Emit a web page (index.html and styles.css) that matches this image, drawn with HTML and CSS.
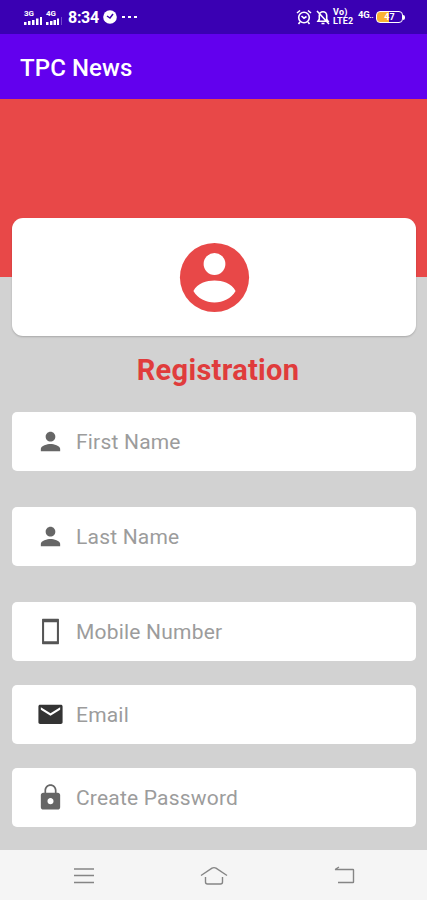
FILE: index.html
```html
<!DOCTYPE html>
<html lang="en">
<head>
    <meta charset="UTF-8">
    <meta name="viewport" content="width=device-width, initial-scale=1.0">
    <title>TPC News</title>
    <link rel="stylesheet" href="styles.css">
</head>
<body>
    <div class="status-bar">
        <div class="signal">
            <span>3G</span>
            <svg width="19" height="8" viewBox="0 0 19 8"><path d="M0 5h2.500v3H0zM4 4h2.500v4H4zM8 3h2.500v5H8zM12 1.500h2.500v6.500H12zM16 0h2v8h-2z"/></svg>
        </div>
        <div class="signal">
            <span>4G</span>
            <svg width="17" height="8" viewBox="0 0 17 8"><path d="M0 5h2.500v3H0zM4 4h2.500v4H4zM7.500 3H10v5H7.500zM11 1.500h2v6.500h-2z"/><path d="M15 0h1v8h-1z" opacity=".3"/></svg>
        </div>
        <span class="time">8:34</span>
        <svg class="clock" width="14" height="14" viewBox="0 0 14 14">
            <circle cx="7" cy="7" r="6.800"/>
            <path d="M4 6l3 2 3-4" fill="none" stroke="#3a00ad" stroke-width="1.500"/>
        </svg>
        <svg class="dots" width="16" height="4" viewBox="0 0 16 4"><path d="M0 1h3v2H0zM6 1h3v2H6zM12 1h3v2h-3z"/></svg>

        <div class="status-right">
            <svg width="16" height="16" viewBox="0 0 16 16" fill="none" stroke="#fff" stroke-width="1.600">
                <circle cx="8" cy="8.500" r="5.300"/>
                <path d="M1 4l3-2.500M15 4l-3-2.500M5.500 7l2.500 2.200 2.500-1.700M4 13l-1.500 2M12 13l1.500 2"/>
            </svg>
            <svg class="bell" width="14" height="16" viewBox="0 0 14 16" fill="none" stroke="#fff" stroke-width="1.600">
                <path d="M2 12.200h10l-1.300-2V6.500a3.700 3.700 0 0 0-7.400 0v3.700zM5.500 14.500h3M1 2l12 13"/>
            </svg>
            <div class="volte"><span>Vo)</span><span>LTE2</span></div>
            <span class="net">4G<small>..</small></span>
            <div class="battery"><span>47</span></div>
            <i class="battery-tip"></i>
        </div>
    </div>

    <header class="app-bar">
        <h1>TPC News</h1>
    </header>

    <main class="content">
        <div class="avatar-card">
            <svg width="83" height="83" viewBox="0 0 24 24">
                <circle cx="12" cy="12" r="10" fill="#e84848"/>
                <circle cx="12" cy="8.100" r="3.150" fill="#fff"/>
                <path d="M5.900 15.900C7.100 13.700 9.700 12.900 12 12.900s4.900.8 6.100 3c-1.300 2.200-3.600 3.300-6.100 3.300s-4.800-1.100-6.100-3.300z" fill="#fff"/>
            </svg>
        </div>

        <h2>Registration</h2>

        <form class="form">
            <label class="field wide">
                <svg width="29" height="29" viewBox="0 0 24 24"><path d="M12 12c2.210 0 4-1.790 4-4s-1.790-4-4-4-4 1.790-4 4 1.790 4 4 4zm0 2c-2.670 0-8 1.340-8 4v2h16v-2c0-2.660-5.330-4-8-4z"/></svg>
                <input type="text" placeholder="First Name">
            </label>
            <label class="field wide">
                <svg width="29" height="29" viewBox="0 0 24 24"><path d="M12 12c2.210 0 4-1.790 4-4s-1.790-4-4-4-4 1.790-4 4 1.790 4 4 4zm0 2c-2.670 0-8 1.340-8 4v2h16v-2c0-2.660-5.330-4-8-4z"/></svg>
                <input type="text" placeholder="Last Name">
            </label>
            <label class="field">
                <svg width="29" height="29" viewBox="0 0 24 24" class="phone"><path d="M18.500 1.500h-13q-.5 0-.5.5v20q0 .5.5.5h13q.5 0 .5-.5V2q0-.5-.5-.5zM17.300 20H6.700V4.300h10.600V20z"/></svg>
                <input type="tel" placeholder="Mobile Number">
            </label>
            <label class="field">
                <svg width="29" height="29" viewBox="0 0 24 24" class="mail"><path d="M20.500 4h-17C2.600 4 2 4.500 2 5.300v13.200c0 .8.600 1.300 1.500 1.300h17c.9 0 1.500-.5 1.500-1.300V5.300c0-.8-.6-1.300-1.500-1.300zm-.5 4l-8 5-8-5V6l8 5 8-5v2z"/></svg>
                <input type="email" placeholder="Email">
            </label>
            <label class="field">
                <svg width="29" height="29" viewBox="0 0 24 24"><path d="M18 8h-1V6c0-2.760-2.240-5-5-5S7 3.240 7 6v2H6c-1.100 0-2 .9-2 2v10c0 1.100.9 2 2 2h12c1.100 0 2-.9 2-2V10c0-1.100-.9-2-2-2zm-6 9.500c-1.400 0-2.500-1.100-2.500-2.500s1.100-2.500 2.500-2.500 2.500 1.100 2.500 2.500-1.100 2.500-2.500 2.500zm3.600-9.500H8.400V6c0-1.990 1.610-3.600 3.600-3.600s3.600 1.610 3.600 3.600v2z"/></svg>
                <input type="password" placeholder="Create Password">
            </label>
        </form>
    </main>

    <nav class="nav-bar">
        <svg width="20" height="18" viewBox="0 0 20 18"><path d="M0 2h20M0 8.500h20M0 15.500h20"/></svg>
        <svg width="28" height="20" viewBox="0 0 28 20"><path d="M1 9.500L12 2.200q2-1.200 4 0L27 9.500M5.500 11v5q0 2 2 2h13q2 0 2-2v-5"/></svg>
        <svg width="21" height="20" viewBox="0 0 21 20"><path d="M1 3.500h18q.5 0 .5.500v12q0 .5-.5.500H4M5 1L1 3.500"/></svg>
    </nav>
</body>
</html>
```
FILE: styles.css
```css
* {
    box-sizing: border-box;
}
body {
    font-family: Roboto, Arial, sans-serif;
    margin: 0;
    height: 900px;
    display: flex;
    flex-direction: column;
    background: #d2d2d2;
    overflow: hidden;
}
svg {
    display: block;
    flex: none;
}
.status-bar {
    height: 34px;
    flex: none;
    display: flex;
    align-items: center;
    padding: 0 22px 0 24px;
    background: #3a00b3;
    color: #fff;
    fill: #fff;
}
.signal {
    width: 22px;
    display: flex;
    flex-direction: column;
    font-size: 8px;
    font-weight: 700;
    line-height: 7px;
}
.time {
    width: 35px;
    padding-top: 2px;
    font-size: 16px;
    font-weight: 700;
    line-height: 20px;
    letter-spacing: -0.3px;
}
.dots {
    margin-left: 5px;
}
.status-right {
    margin-left: auto;
    display: flex;
    align-items: center;
}
.bell {
    margin: 0 3px 0 4px;
}
.volte {
    width: 25px;
    display: flex;
    flex-direction: column;
    font-size: 9px;
    font-weight: 700;
    line-height: 9px;
    letter-spacing: 0.2px;
}
.volte span {
    height: 9px;
}
.net {
    width: 18px;
    height: 16px;
    font-size: 9.5px;
    font-weight: 700;
    line-height: 12px;
    letter-spacing: -0.3px;
}
.net small {
    font-size: 8px;
}
.battery {
    width: 27px;
    height: 12px;
    border: 1.5px solid #fff;
    border-radius: 4px;
    background: linear-gradient(90deg, #f9b233 47%, #3a00b3 47%);
    font-size: 9px;
    font-weight: 700;
    line-height: 10px;
    text-align: center;
}
.battery-tip {
    width: 2px;
    height: 5px;
    border-radius: 0 2px 2px 0;
    background: #fff;
}
.app-bar {
    height: 65px;
    flex: none;
    display: flex;
    align-items: center;
    padding: 2px 0 0 20px;
    background: #6200ee;
}
.app-bar h1 {
    margin: 0;
    font-size: 24px;
    font-weight: 500;
    letter-spacing: 0.1px;
    color: #fff;
}
.content {
    flex: 1;
    min-height: 0;
    padding: 119px 11px 0 12px;
    background: linear-gradient(#e84848 178px, #d2d2d2 178px);
}
.avatar-card {
    height: 118px;
    display: flex;
    justify-content: center;
    align-items: center;
    border-radius: 11px;
    background: #fff;
    box-shadow: 0 1px 2px rgba(0, 0, 0, 0.2);
}
.content h2 {
    margin: 16px 0 24px;
    padding-left: 8px;
    text-align: center;
    font-size: 29px;
    font-weight: 700;
    line-height: 36px;
    letter-spacing: 0.3px;
    color: #e03c3c;
}
.field {
    height: 59px;
    margin-bottom: 24px;
    display: flex;
    align-items: center;
    padding-left: 24px;
    border-radius: 5px;
    background: #fff;
    fill: #666;
}
.field.wide {
    margin-bottom: 36px;
}
.field input {
    flex: 1;
    min-width: 0;
    margin-left: 11px;
    padding: 1px 0 0;
    border: none;
    outline: none;
    background: none;
    font-family: inherit;
    font-size: 21px;
    letter-spacing: 0.2px;
}
.field input::placeholder {
    color: #9c9c9c;
    opacity: 1;
}
.phone {
    fill: #555;
}
.mail {
    fill: #333;
}
.nav-bar {
    height: 50px;
    flex: none;
    display: flex;
    justify-content: space-between;
    align-items: center;
    padding: 1px 72px 0 74px;
    background: #f5f5f5;
    fill: none;
    stroke: #858585;
    stroke-width: 1.4;
}
```
